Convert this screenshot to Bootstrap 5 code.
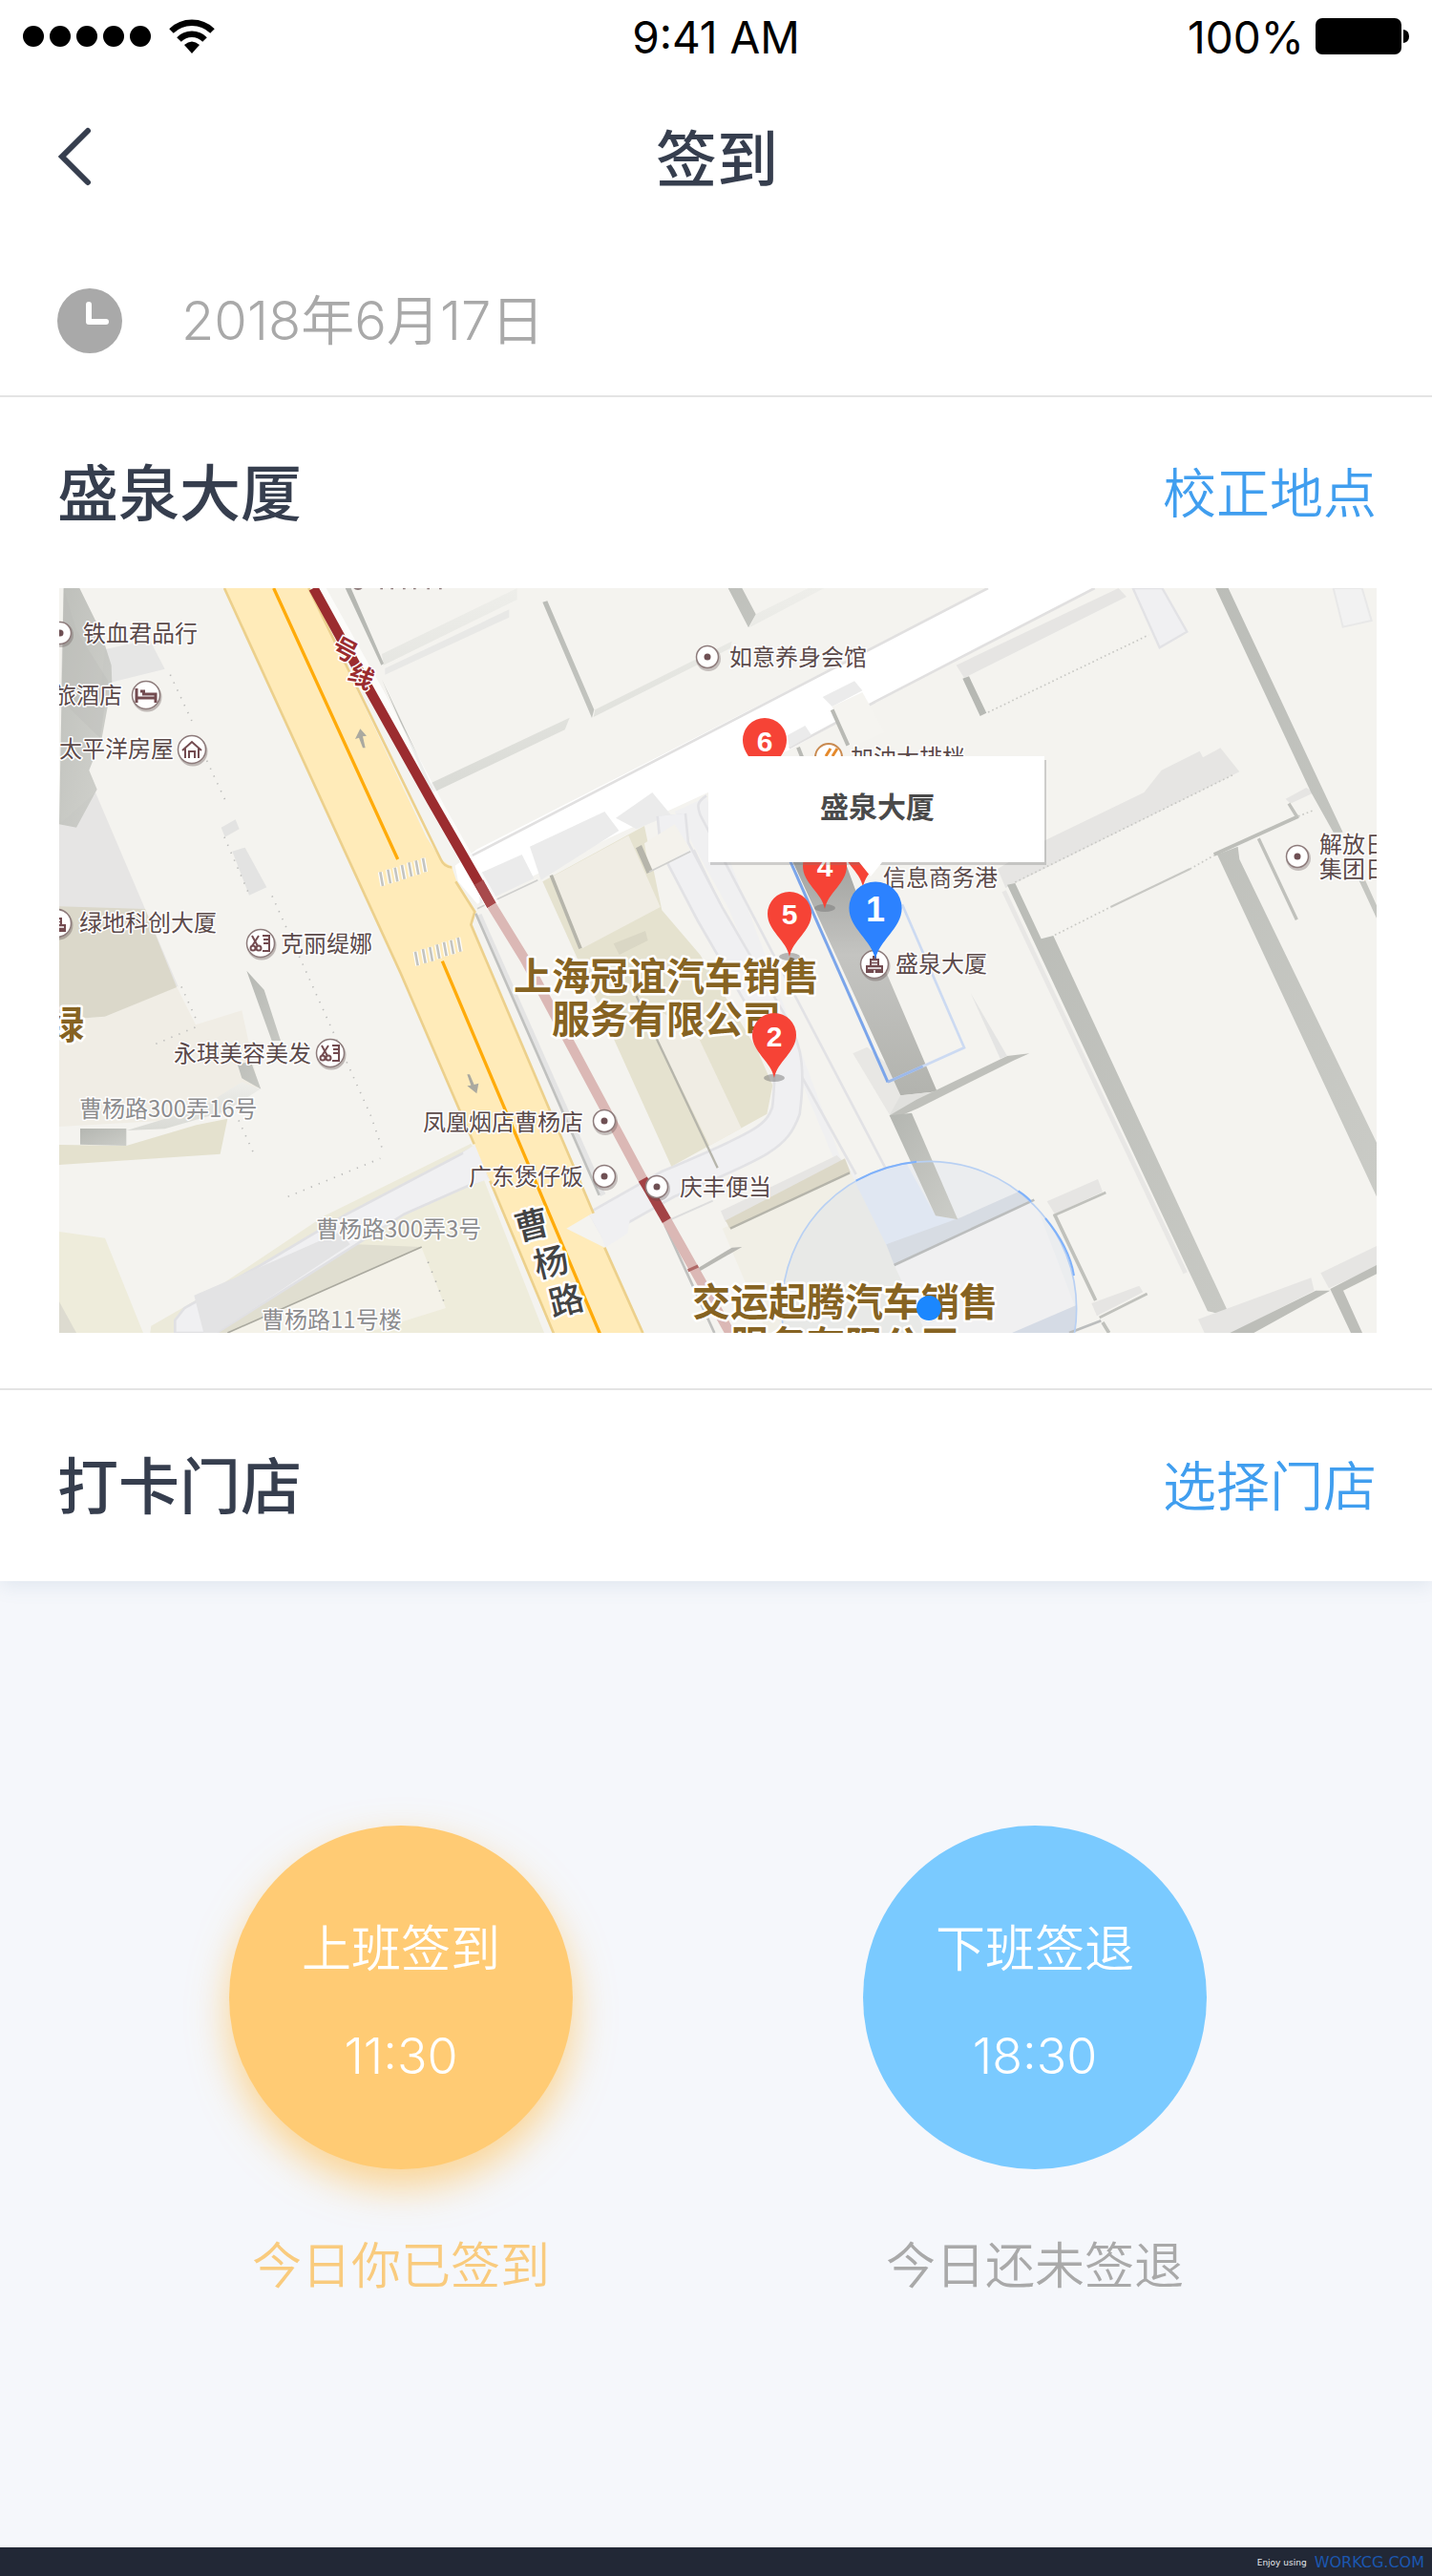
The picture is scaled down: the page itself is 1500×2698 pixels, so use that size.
<!DOCTYPE html>
<html lang="zh-CN">
<head>
<meta charset="utf-8">
<meta name="viewport" content="width=device-width, initial-scale=1">
<title>签到</title>
<link rel="stylesheet" href="https://cdn.jsdelivr.net/npm/bootstrap@5.3.0/dist/css/bootstrap.min.css">
<style>
  :root { --ink:#363e4e; --muted:#a9a9a9; --sky:#409eef; --line:#e4e4e4; }
  body { font-family:Inter,"Noto Sans CJK SC",sans-serif; color:var(--ink); background:#f5f7fb; }
  .px-edge { padding-left:60px; padding-right:58px; }
  .status-row { height:76px; padding:2px 24px 0; font-size:46px; line-height:56px; color:#000; }
  .status-row svg { margin-bottom:2px; }
  .signal { gap:18px; }
  .battery { gap:12px; }
  .title-row { height:180px; padding-top:2px; }
  .date-row { height:160px; gap:62px; padding-top:2px; font-size:56px; line-height:64px; font-weight:350; color:var(--muted); }
  .head-row { height:200px; padding-top:2px; }
  .side { flex:1 1 0; }
  .big-title { font-size:64px; line-height:80px; font-weight:500; }
  .text-link { font-size:56px; line-height:80px; font-weight:350; color:var(--sky); text-decoration:none; }
  .rule-bottom { border-bottom:2px solid var(--line); }
  .sheet { box-shadow:0 4px 20px rgba(90,130,160,.14); position:relative; }
  .map-wrap { padding:0 58px 58px 62px; }
  .map-wrap svg { display:block; width:100%; height:auto; }
  .punch-area { padding:256px 0 120px 4px; gap:304px; }
  .punch { width:360px; height:360px; border:0; border-radius:50%; color:#fff; gap:48px; padding:12px 0 0; font-size:52px; line-height:64px; font-weight:350; }
  .punch-in { background:#ffcb74; box-shadow:0 18px 40px rgba(255,190,80,.62); }
  .punch-out { background:#7acaff; }
  .punch-note { margin-top:70px; font-size:52px; line-height:64px; font-weight:350; color:var(--muted); white-space:nowrap; }
  .note-done { color:#f9cb7e; }
  .credit { height:30px; padding:2px 8px 0; background:#222836; font-family:"DejaVu Sans",sans-serif; font-size:9px; color:#e6e8ec; gap:8px; line-height:20px; }
  .credit a { font-size:16px; color:#1b57b0; text-decoration:none; }
  .map-wrap text { font-family:"Noto Sans CJK SC",sans-serif; font-size:24px; fill:#5b4a4a; stroke:#fff; stroke-width:3px; stroke-linejoin:round; paint-order:stroke; }
  .map-wrap .lane-name { fill:#8c8c8e; }
  .map-wrap .firm-name { font-size:40px; font-weight:700; fill:#866322; stroke-width:5px; }
  .map-wrap .road-name { font-size:36px; font-weight:500; fill:#444; text-anchor:middle; stroke-width:5px; }
  .map-wrap .metro-name { font-size:26px; font-weight:700; fill:#9b2c2f; text-anchor:middle; }
  .map-wrap .pin-no { font-family:"Liberation Sans",sans-serif; font-size:30px; font-weight:700; fill:#fff; stroke:none; text-anchor:middle; }
  .map-wrap .pin-main { font-size:36px; }
  .map-wrap .tip-name { font-size:30px; font-weight:700; fill:#4a4a4a; stroke:none; text-anchor:middle; }
</style>
<script src="https://cdn.jsdelivr.net/npm/bootstrap@5.3.0/dist/js/bootstrap.bundle.min.js"></script>
</head>
<body>
<div class="d-flex flex-column min-vh-100">
  <div class="sheet bg-white">
    <div class="status-row d-flex align-items-center">
      <div class="side signal d-flex align-items-center">
        <svg width="134" height="22" viewBox="0 0 134 22" aria-hidden="true"><circle cx="11" cy="11" r="11"/><circle cx="39" cy="11" r="11"/><circle cx="67" cy="11" r="11"/><circle cx="95" cy="11" r="11"/><circle cx="123" cy="11" r="11"/></svg>
        <svg width="50" height="38" viewBox="0 0 50 38" aria-hidden="true"><g fill="none" stroke="#000" stroke-width="6.5"><path d="M3.500 13.500a31 31 0 0 1 43 0"/><path d="M11.500 22.500a19 19 0 0 1 27 0"/></g><path d="M25 37l-8-9q8-7 16 0z"/></svg>
      </div>
      <div>9:41 AM</div>
      <div class="side battery d-flex align-items-center justify-content-end">
        <span>100%</span>
        <svg width="98" height="38" viewBox="0 0 98 38" aria-hidden="true"><rect width="90" height="38" rx="7"/><path d="M92 12q6 1 6 7t-6 7z"/></svg>
      </div>
    </div>

    <header class="title-row px-edge d-flex align-items-center">
      <div class="side"><a href="#" aria-label="返回" class="d-inline-block"><svg class="d-block" width="36" height="62" viewBox="0 0 36 62" fill="none" stroke="#363e4e" stroke-width="6" stroke-linecap="round"><path d="M32 4L5 31l27 27"/></svg></a></div>
      <h1 class="big-title m-0">签到</h1>
      <div class="side"></div>
    </header>

    <div class="date-row px-edge d-flex align-items-center rule-bottom">
      <svg class="flex-shrink-0" width="68" height="68" viewBox="0 0 68 68" aria-hidden="true"><circle cx="34" cy="34" r="34" fill="#a9a9a9"/><path d="M33 17v18h18" fill="none" stroke="#fff" stroke-width="6" stroke-linecap="round" stroke-linejoin="round"/></svg>
      <time datetime="2018-06-17">2018年6月17日</time>
    </div>

    <section class="rule-bottom">
      <div class="head-row px-edge d-flex align-items-center justify-content-between">
        <h2 class="big-title m-0">盛泉大厦</h2>
        <a class="text-link" href="#">校正地点</a>
      </div>
      <div class="map-wrap">
        <svg viewBox="0 0 1380 780" role="img" aria-label="盛泉大厦附近地图">
          <defs>
            <linearGradient id="wall" x1="0" y1="0" x2="1" y2="1"><stop offset="0" stop-color="#b4b6b1"/><stop offset="1" stop-color="#cccdc8"/></linearGradient>
            <linearGradient id="tower" x1="0" y1="0" x2="0" y2="1"><stop offset="0" stop-color="#a2a3a0"/><stop offset=".4" stop-color="#c4c4c1"/><stop offset="1" stop-color="#b2b3ae"/></linearGradient>
            <linearGradient id="sill" x1="0" y1="0" x2="0" y2="1"><stop offset="0" stop-color="#eeeeea"/><stop offset="1" stop-color="#d9dad5"/></linearGradient>
            <g id="spot"><circle cx="1" cy="2" r="13" fill="#5b4a4a" opacity=".3"/><circle r="11.500" fill="#fff" stroke="#8d7b7b" stroke-width="1.500"/><circle r="3.500" fill="#6f5054"/></g>
            <g id="disc"><circle cx="1" cy="2" r="15.500" fill="#5b4a4a" opacity=".35"/><circle r="14.500" fill="#fff" stroke="#8d7b7b" stroke-width="1.500"/></g>
            <g id="salon"><use href="#disc"/><path d="M-9-8l6 11m1-11l-7 11M2-8h7v16H2m1-8h6M3-4h6" fill="none" stroke="#734b50" stroke-width="2"/><circle cx="-8" cy="5" r="2.500" fill="none" stroke="#734b50" stroke-width="2"/><circle cx="-2" cy="5" r="2.500" fill="none" stroke="#734b50" stroke-width="2"/></g>
            <g id="office"><use href="#disc"/><path d="M-9 9V1h4v-7h3v-3h4v3h3v7h4v8z" fill="#734b50"/><path d="M-7 4h14M-3 0h6M-3-3h6M0 9V6" stroke="#fff" stroke-width="1.500"/></g>
            <path id="pin" d="M0 45C-3 28-23 18-23 0a23 23 0 1 1 46 0C23 18 3 28 0 45z"/>
            <clipPath id="range"><circle cx="2800" cy="2312" r="463"/></clipPath>
          </defs>
          <rect width="1380" height="780" fill="#f4f3ef"/>
          <!-- ground, buildings and roads, drawn at three units to one map unit -->
          <g transform="translate(-22 -16) scale(.333333)">
            <!-- west blocks -->
            <path d="M180 690L440 1300H66V790z" fill="#e6e5e4"/>
            <path d="M210 240l140-30 48 92-200 50z" fill="#e6e6e5"/>
            <path d="M80 48h50l65 132 35 110 2 55-32 175-40 100 25 60-65 120-54-10z" fill="url(#wall)" opacity=".85"/>
            <path d="M80 48l-10 350 125 122 25-180L120 180z" fill="#b9bbb6" opacity=".3"/>
            <path d="M66 1405l144-10 225-95 60 120 145-45 52 240-190 100-436 25z" fill="#f0ede5"/>
            <path d="M66 1048l270 8 99 246-225 92-144 11z" fill="#dbd8ca"/>
            <path d="M655 1250l55 60 52 160h-28zM625 1540h45l30 82-60-34z" fill="url(#wall)"/>
            <path d="M640 1600l58 22-110 70-190 55-120 5 230-70z" fill="url(#sill)"/>
            <path d="M66 1797l211 3 220-65 98-20-23 111-506 34z" fill="#e4e1ce"/>
            <path d="M132 1746h145v54l-145-4z" fill="url(#wall)"/>
            <path d="M575 800l45-25 12 30-45 25zM610 875l40-12 68 125-55 25z" fill="#e3e3e2"/>
            <path d="M415 320l70 150M530 590l65 140M585 830l80 185M735 1015l310 690 40 115M450 1300l45 100M630 1720l50 110M370 1480l130-55M785 1960l290-120" fill="none" stroke="#bcbcba" stroke-width="5" stroke-dasharray="4 22"/>
            <path d="M66 2070l144 20 120 298H66z" fill="#eeecdb"/><path d="M66 2290l54 98H66z" fill="#dddbd0"/>
            <!-- south-west lane -->
            <path d="M1400 1905l190 483H560l590-370z" fill="#eeecdb"/>
            <path d="M355 2366l185-106 360-240 460-227 12 20-440 225-470 300-20 50h-90z" fill="#eceada"/>
            <path d="M1000 2110l205 8-600 270h-70z" fill="#e0ded0"/><path d="M1205 2120l76 190-250 78H595z" fill="#f4f2e9"/>
            <path d="M1205 2118L595 2388" stroke="#aaa99f" stroke-width="5"/>
            <path d="M1370 1805l40 95-260 115L560 2388H430v-40l30-38 240-135 260-155z" fill="#f0f0f2" stroke="#e0e0e3" stroke-width="8"/>
            <path d="M490 2270l210-90 250-110 30 40-420 278h-40z" fill="#e3e3e4"/>
            <path d="M1225 2165l50 125" stroke="#aaa" stroke-width="5" stroke-dasharray="4 28"/>
            <!-- north blocks -->
            <path d="M1090 300l390-185v25L1090 320z" fill="#e8e8e6"/>
            <path d="M1080 255L1505 48v36L1085 290zM1235 660l435-205-15 38-415 198zM1750 430l430-215-5 22-430 216zM2255 130l165-82h50L2235 172z" fill="url(#sill)"/>
            <path d="M965 48h18l103 237-8 5zM1080 335l160 340-5 18zM1585 92l15-4 147 342-7 26zM2168 48h44l43 82-23 42z" fill="url(#wall)"/>
            <path d="M1075 48h8m25 0h8m30 0h8m25 0h8m35 0h8m30 0h8" stroke="#8d7b7b" stroke-width="8"/><circle cx="1005" cy="34" r="20" fill="#8d7b7b"/>
            <!-- white cross street -->
            <path d="M1310 920l70-52L2985 48h335L2620 410l-240 135-275 145-305 140-420 210-60-70z" fill="#fff"/>
            <path d="M1360 890L2985 48M2620 410L3320 48M2360 550l270-145" stroke="#e1e0e0" stroke-width="8"/>
            <!-- civic courtyard -->
            <path d="M1385 945l135-60 38 75-170 80zM1545 860l235-110 45 60-245 155zM1815 770l115-80 58 70-108 45z" fill="#ebebeb"/>
            <path d="M2000 750l100-45 420 1130 160 190-90 30-420-1000z" fill="#f0f0f1"/>
            <path d="M2100 700c-30 20-30 30-20 60l640 1220-75 40M2030 870l340 660 200 360M2060 870l120 250" fill="none" stroke="#e2e2e5" stroke-width="8"/>
            <path d="M1990 760l10 100 110 210 180 310c60 100 80 150 60 310-30 80-60 100-370 230l-230 130" fill="none" stroke="#e2e2e5" stroke-width="96"/>
            <path d="M1990 760l10 100 110 210 180 310c60 100 80 150 60 310-30 80-60 100-370 230l-230 130" fill="none" stroke="#f0f0f2" stroke-width="80"/>
            <path d="M1585 970l320-175 55 265 120 140 180 300 48 110-18 90-300 165z" fill="#e5e2cf"/>
            <path d="M1615 955l240-130 100 225-245 130zM1880 1330l190 120 140 295-100 55z" fill="#f0ede4"/>
            <path d="M1612 950l92 230" stroke="#b6b5ab" stroke-width="11"/><path d="M1880 1330l255 540" stroke="#b6b5ab" stroke-width="7"/>
            <path d="M1905 850l95-60 50 80-130 70z" fill="#f4f2ec"/><path d="M1878 865l18-10 35 80-18 10z" fill="#b6b5ab"/><path d="M1808 1165l100-40 8 30-90 45z" fill="#dad7c5"/>
            <path d="M1570 965l-190 90M1920 940l130-65" stroke="#cfcfcd" stroke-width="5"/>
            <!-- south yard -->
            <path d="M2150 2060l400-180 290 508H2290z" fill="#f1efe6"/>
            <path d="M2145 2005l365-175 20 20-370 190z" fill="#e6e5e3"/><path d="M2160 2035l375-195 18 45-380 175z" fill="#dcd8c7"/>
            <path d="M2175 2060l375-175" stroke="#b5b4aa" stroke-width="7"/><path d="M2068 2188l112-68 32-2-140 80z" fill="#b8b8b3"/>
            <path d="M1980 2035l140-62" stroke="#ddd" stroke-width="6"/>
            <!-- Caoyang road -->
            <path d="M585 48L1140 1260l230 535 50 115 200 480h285l-125-270-120-60 85-50-320-750-65-160 15-35-60-95-15-45-35-25-45-70L850 48z" fill="#ffebb9"/>
            <path d="M1745 2012l37 108 70-45 20-120z" fill="#f0f0f2"/><path d="M1372 1797l43 108-60 20-20-105z" fill="#f0f0f2"/>
            <path d="M585 48L1140 1260l230 535M1420 1910l200 480M850 48l415 852c8 18 18 25 35 25M1312 970l60 95-12 40 385 907M1780 2120l120 268" fill="none" stroke="#ecd08c" stroke-width="8"/>
            <path d="M740 48l390 852M1270 1220l495 1170" stroke="#ffab0a" stroke-width="10"/>
            <path d="M1075 940l8 44m16-52l8 44m14-50l8 44m14-52l8 44m14-52l8 44m14-50l8 44m14-52l8 44M1185 1190l8 44m16-52l8 44m14-50l8 44m14-52l8 44m14-52l8 44m14-50l8 44m14-52l8 44" stroke="#fff" stroke-width="15"/>
            <path d="M1075 940l8 44m16-52l8 44m14-50l8 44m14-52l8 44m14-52l8 44m14-50l8 44m14-52l8 44M1185 1190l8 44m16-52l8 44m14-50l8 44m14-52l8 44m14-52l8 44m14-50l8 44m14-52l8 44" stroke="#c5c5c0" stroke-width="8"/>
            <path d="M1012 490l-16 32 12-4 12 32h8l-8-36 12-2zM1378 1636l-30-24 12-2-12-34h8l14 32 14-4z" fill="#aaa9a0"/>
            <path d="M1385 1075l390 880" stroke="#e4e4e4" stroke-width="18"/><path d="M1375 1070l388 885M1970 2050l155 338" stroke="#c0c1bf" stroke-width="8"/>
            <path d="M880 48l190 340 185 350 175 310" fill="none" stroke="#fff" stroke-width="44" opacity=".7"/>
            <path d="M865 48l180 327 190 340 190 330" fill="none" stroke="#9b2c2f" stroke-width="31"/><path d="M1385 972l40 73" stroke="#a84a4c" stroke-width="31"/>
            <path d="M1425 1045l105 170 375 700M1975 2035l200 355" fill="none" stroke="#dbb8b5" stroke-width="31"/>
            <path d="M1900 1905l75 130" stroke="#a34245" stroke-width="31"/><path d="M2042 2192l32-14" stroke="#b06a68" stroke-width="10"/>
            <!-- tower -->
            <path d="M2560 1510l45-20 175 150-105 62z" fill="#e8e7e4"/>
            <path d="M2370 905h165l115 315 175 410-115 12z" fill="url(#tower)"/><path d="M2710 1642l115-12-150 75z" fill="#e0e0dd"/>
            <path d="M3115 1510l-70 8-285 137-85 50 10 12 80-35 300-150z" fill="#bfc0bb"/>
            <path d="M2930 1320l115 198-22 8z" fill="#e4e4e3"/>
            <path d="M2670 1600l240-108-195-450" fill="none" stroke="#ccdaf2" stroke-width="8"/><path d="M2363 905l307 695" stroke="#7ba5ea" stroke-width="9"/><path d="M2670 1600l110-50" stroke="#9db9e9" stroke-width="8"/>
            <!-- east blocks -->
            <path d="M2885 290L3395 48l25 27L2910 330zM3015 930l150-90 310-150 55-70 120-60 10 20 55-30 60 75-735 365zM3920 710l65-35 25 15-75 35z" fill="#e6e5e3"/>
            <path d="M2905 332l20-7 55 115-20 10zM3700 48h40l360 767h-30l-70-125zM4150 965h20l36 80v40zM3045 980l25-5 82 175 38-10 555 1195-70-15zM3705 885l65-25 5 40 431 890v170z" fill="url(#wall)"/>
            <path d="M3035 1000l570 1200" stroke="#e8e7e5" stroke-width="14"/>
            <path d="M3695 885l265-120" stroke="#bdbeb9" stroke-width="11"/><path d="M3370 1050l250-120" stroke="#c8c8c4" stroke-width="6"/><path d="M3835 835l120 255M3930 725l25 40" stroke="#c0c1bc" stroke-width="10"/>
            <path d="M2985 438l505-243M3070 972l690-340M3195 1138l175-88M3620 930l75-42M3960 765l45-18" stroke="#c8c8c4" stroke-width="5" stroke-dasharray="5 9"/>
            <path d="M3440 48h92l78 137-86 50z" fill="#f0f0f2" stroke="#e2e2e5" stroke-width="7"/><path d="M4070 48h90l30 102-90 20z" fill="#f2f2f2" stroke="#e8e8e8" stroke-width="6"/>
            <path d="M3645 2345l355-130 10 40-260 133h-85zM4030 2200l176-85v65l-150 68zM3170 1975l160-70 15 40-150 70zM3310 2295l150-55 12 20-145 75z" fill="#e6e5e3"/>
            <path d="M4015 2255h45l-240 133h-75zM4060 2250l146-75v28l-105 52 60 133h-36z" fill="#bdbeb9"/>
            <path d="M3190 2020l165-73M3335 2340l150-75" stroke="#c0c1bc" stroke-width="8"/><path d="M3195 2018l128 268M3345 2355l20 33" stroke="#c0c1bc" stroke-width="11"/>
            <!-- corner of the store block and the search range -->
            <g clip-path="url(#range)">
              <circle cx="2800" cy="2312" r="463" fill="#4a90ff" opacity=".05"/>
              <path d="M2560 1900l160-60 100 180 70 12-220 90z" fill="#e0e7f2"/>
              <path d="M2690 2175l440-205 160 418h-500z" fill="#f0f0f1"/>
              <path d="M2665 2110l235-85 190-85 40 30-440 205z" fill="#d7dce3"/>
              <path d="M3060 2388l220-95 30 60-50 35z" fill="#d5dbe5"/>
            </g>
            <path d="M2690 2175l440-205M3240 2388l100-38" stroke="#bbbdbd" stroke-width="8"/>
            <path d="M2675 1705l70-8 145 335-70-12z" fill="url(#wall)"/>
            <circle cx="2800" cy="2312" r="463" fill="none" stroke="#b8d0f3" stroke-width="5"/>
            <path d="M2570 1910q90-50 190-60M3080 1942q30 20 40 34M3165 2028q75 90 90 180" fill="none" stroke="#7fb1fa" stroke-width="6"/>
            <path d="M2465 390l100-50 25 30-95 50zM2355 510l55-30 20 30-70 40z" fill="#ebebeb"/><path d="M2495 420l95-45 70 125-110 50z" fill="#f5f4f0"/><path d="M2495 430l50 112M2388 548l12 30" stroke="#b9bab5" stroke-width="12"/>
          </g>
          <!-- place names -->
          <use href="#spot" x="1" y="47"/><text x="25" y="56">铁血君品行</text>
          <text x="-6" y="121">旅酒店</text><use href="#disc" x="91" y="112"/><path d="M81 105v15m0-5h20m0 5v-9H87m-2-3h5" fill="none" stroke="#734b50" stroke-width="3"/>
          <text x="0" y="177">太平洋房屋</text><use href="#disc" x="139" y="169"/><path d="M129 170l10-9 10 9M132 168v10m14-10v10m-10 0v-7h6v7" fill="none" stroke="#734b50" stroke-width="2"/>
          <use href="#office" x="-2" y="351"/><text x="21" y="359">绿地科创大厦</text>
          <use href="#salon" x="211" y="372"/><text x="232" y="381">克丽缇娜</text>
          <text class="firm-name" x="-14" y="472">绿</text>
          <text x="120" y="496">永琪美容美发</text><use href="#salon" x="284" y="487"/>
          <text class="lane-name" x="21" y="554">曹杨路300弄16号</text>
          <text class="lane-name" x="269" y="680">曹杨路300弄3号</text>
          <text class="lane-name" x="212" y="775">曹杨路11号楼</text>
          <text x="381" y="568">凤凰烟店曹杨店</text><use href="#spot" x="571" y="558"/>
          <text x="429" y="625">广东煲仔饭</text><use href="#spot" x="571" y="616"/>
          <use href="#spot" x="626" y="627"/><text x="650" y="636">庆丰便当</text>
          <text class="firm-name" x="476" y="421">上海冠谊汽车销售</text><text class="firm-name" x="516" y="466">服务有限公司</text>
          <text class="firm-name" x="663" y="762">交运起腾汽车销售</text><text class="firm-name" x="703" y="807">服务有限公司</text>
          <text class="road-name" transform="rotate(-14 495 667)" x="495" y="680">曹</text><text class="road-name" transform="rotate(-14 515 706)" x="515" y="719">杨</text><text class="road-name" transform="rotate(-14 531 746)" x="531" y="759">路</text>
          <text class="metro-name" transform="rotate(28 300 64)" x="300" y="74">号</text><text class="metro-name" transform="rotate(28 317 92)" x="317" y="102">线</text>
          <use href="#spot" x="679" y="72"/><text x="702" y="81">如意养身会馆</text>
          <circle cx="806" cy="177" r="14" fill="#fff" stroke="#c98a50" stroke-width="2"/><path d="M803 176l5-8m2 8l5-8" stroke="#e58a2c" stroke-width="3"/><text x="829" y="186">加油大排档</text>
          <text x="863" y="312">信息商务港</text>
          <use href="#office" x="854" y="394"/><text x="876" y="402">盛泉大厦</text>
          <use href="#spot" x="1297" y="281"/><text x="1320" y="277">解放日</text><text x="1320" y="303">集团日</text>
          <!-- numbered pins -->
          <g fill="#777" opacity=".5"><ellipse cx="765" cy="386" rx="11" ry="4"/><ellipse cx="802" cy="335" rx="11" ry="4"/><ellipse cx="749" cy="513" rx="11" ry="4"/></g>
          <g fill="#f64336"><use href="#pin" x="739" y="159"/><use href="#pin" x="842" y="268"/><use href="#pin" x="802" y="291"/><use href="#pin" x="765" y="341"/><use href="#pin" x="749" y="468"/></g>
          <use href="#pin" transform="translate(855 335) scale(1.200)" fill="#2c82ff"/>
          <text class="pin-no" x="739" y="171">6</text><text class="pin-no" x="802" y="302">4</text><text class="pin-no" x="765" y="352">5</text><text class="pin-no" x="749" y="480">2</text><text class="pin-no pin-main" x="855" y="349">1</text>
          <!-- callout -->
          <path d="M682 180h352v110H682z" fill="#777" opacity=".3"/><path d="M680 176h352v111H862l-12 15-12-15H680z" fill="#fff"/>
          <text class="tip-name" x="857" y="240">盛泉大厦</text>
          <circle cx="911" cy="754" r="13" fill="#1b87fe"/>
        </svg>
      </div>
    </section>

    <section class="head-row px-edge d-flex align-items-center justify-content-between">
      <h2 class="big-title m-0">打卡门店</h2>
      <a class="text-link" href="#">选择门店</a>
    </section>
  </div>

  <main class="punch-area flex-grow-1 d-flex justify-content-center">
    <div class="d-flex flex-column align-items-center">
      <button type="button" class="punch punch-in d-flex flex-column align-items-center justify-content-center"><span>上班签到</span><span>11:30</span></button>
      <p class="punch-note note-done mb-0">今日你已签到</p>
    </div>
    <div class="d-flex flex-column align-items-center">
      <button type="button" class="punch punch-out d-flex flex-column align-items-center justify-content-center"><span>下班签退</span><span>18:30</span></button>
      <p class="punch-note mb-0">今日还未签退</p>
    </div>
  </main>

  <footer class="credit d-flex align-items-center justify-content-end"><span>Enjoy using</span><a href="#">WORKCG.COM</a></footer>
</div>
</body>
</html>
